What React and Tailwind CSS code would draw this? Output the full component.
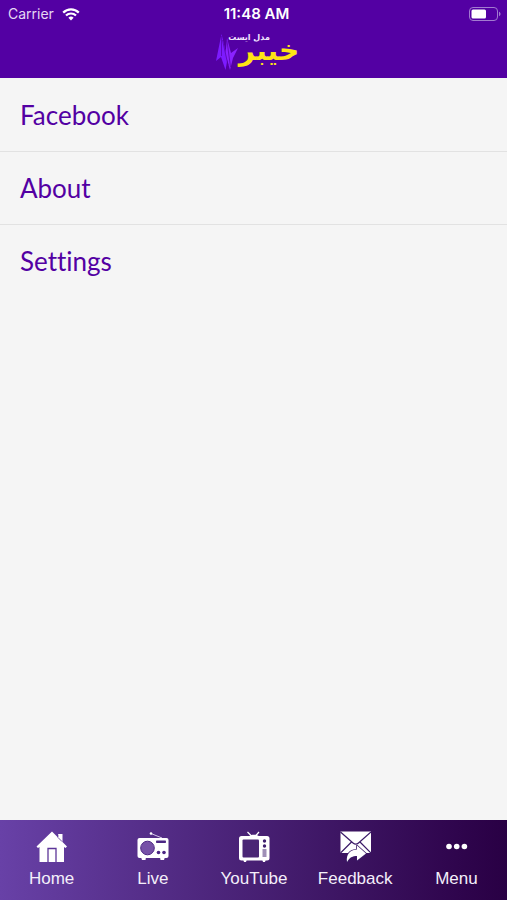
const menuItems = ['Facebook', 'About', 'Settings'];

function WifiIcon() {
  return (
    <svg viewBox="0 0 18 13" className="h-[13px] w-[18px]" fill="none" stroke="#fff" strokeWidth="2.2" aria-hidden="true">
      <path d="M1.2 4.6a11 11 0 0 1 15.6 0" />
      <path d="M4 7.6a7 7 0 0 1 10 0" />
      <path d="M9 12.4 6.4 9.8a3.7 3.7 0 0 1 5.2 0z" fill="#fff" stroke="none" />
    </svg>
  );
}

function BatteryIcon() {
  return (
    <svg viewBox="0 0 32 14" className="h-[14px] w-[32px]" aria-hidden="true">
      <rect x="0.5" y="0.5" width="28" height="13" rx="3.5" fill="none" stroke="#a27bd0" />
      <rect x="2.5" y="2.5" width="14.5" height="9" rx="1.5" fill="#fff" />
      <path d="M30 4.8c2 .7 2 3.7 0 4.4z" fill="#a27bd0" />
    </svg>
  );
}

function Logo() {
  return (
    <svg viewBox="0 2 92 44" className="h-11 w-[92px] overflow-visible" role="img" aria-label="خیبر">
      <path d="M9.500 6 4 33l5-4L13.500 42l2-11z" fill="#7d1bff" />
      <path d="M15 10 13.500 26l4.500 16 3-12 5-10-7 5z" fill="#8a22ff" />
      <path d="M9.500 8v20M10.500 12l5.500 25M15 13l3.500 26" stroke="#5300a3" strokeWidth="0.700" fill="none" />
      <text x="37" y="12" textAnchor="middle" fontSize="8" fontWeight="700" fill="#f3e8ff" className="font-['DejaVu_Sans',sans-serif]">
        مدل ایست
      </text>
      <text x="57" y="32" textAnchor="middle" fontSize="28" fontWeight="700" fill="#ffe414" className="font-['DejaVu_Sans',sans-serif]">
        خیبر
      </text>
    </svg>
  );
}

function HomeIcon() {
  return (
    <svg viewBox="0 0 32 32" className="size-8" fill="#fff" aria-hidden="true">
      <path d="M16 .5 31 15.500l-1.500 1.500-1.500-1V31H3.500V16L2 17 .5 15.500z" />
      <path d="M22 3h4.500v8L22 6.500z" />
      <path d="M22 3.500v3l4 4" fill="none" stroke="#5d3699" strokeWidth="0.7" />
      <path d="M12 31V17.500h8V31" fill="none" stroke="#5d3699" strokeWidth="1.300" />
    </svg>
  );
}

function RadioIcon() {
  return (
    <svg viewBox="0 0 32 32" className="size-8" fill="#fff" aria-hidden="true">
      <path d="m14 2.500 11 4.500" stroke="#d6c8ea" strokeWidth="1" />
      <circle cx="14" cy="2.500" r="1.300" />
      <rect x="0.500" y="7" width="31" height="20" rx="2" />
      <path d="M4 26h5l-.5 3H5zM23 26h5l-1 3h-3.500z" />
      <circle cx="10.500" cy="17" r="6.800" fill="#7651a7" stroke="#4d2785" strokeWidth="1" />
      <rect x="19" y="9.500" width="10" height="2.500" rx="0.800" fill="#4b2684" />
      <circle cx="21.500" cy="21.500" r="1.800" fill="#4b2684" />
      <circle cx="27" cy="21.500" r="1.800" fill="#4b2684" />
    </svg>
  );
}

function TvIcon() {
  return (
    <svg viewBox="0 0 32 32" className="size-8" fill="#fff" aria-hidden="true">
      <path d="m9.500 1 4 4M21 1l-3.500 4" stroke="#fff" strokeWidth="1.200" />
      <path d="M11 5.500c1-2.500 9-2.500 10 0z" />
      <path d="M5 28h4l-1 3H6zM24 28h4l-1 3h-2z" />
      <rect x="1" y="5" width="30.500" height="24.500" rx="2.500" />
      <rect x="4.500" y="8.500" width="16.500" height="18" rx="1" fill="#4a2675" />
      <circle cx="26.500" cy="10" r="1.700" fill="#40206f" />
      <circle cx="26.500" cy="15" r="1.700" fill="#40206f" />
      <path d="M24.500 19h4M24.500 21h4M24.500 23h4M24.500 25h4" stroke="#40206f" strokeWidth="1" />
    </svg>
  );
}

function FeedbackIcon() {
  return (
    <svg viewBox="0 0 32 32" className="size-8" fill="#fff" aria-hidden="true">
      <path d="M1.500 .5H32V22H1.500z" />
      <path d="m1.500 1 12.500 11c2 1.800 3.500 1.800 5.500 0L32 1M1.500 22l11-11M32 22l-11-11" fill="none" stroke="#3b1a68" strokeWidth="1.200" />
      <path
        d="M8 31C7 23 11 19 18 18.500V14.500l9 8-9 7V25c-4.500 0-7.500 1.500-10 6z"
        stroke="#3b1a68"
        strokeWidth="1.600"
        strokeLinejoin="round"
      />
      <path d="M8 31C7 23 11 19 18 18.500V14.500l9 8-9 7V25c-4.500 0-7.500 1.500-10 6z" />
    </svg>
  );
}

function MoreIcon() {
  return (
    <svg viewBox="0 0 32 32" className="size-8" fill="#fff" aria-hidden="true">
      <circle cx="9" cy="15.500" r="2.800" />
      <circle cx="16.700" cy="15.500" r="2.800" />
      <circle cx="24.400" cy="15.500" r="2.800" />
    </svg>
  );
}

const tabs = [
  { label: 'Home', Icon: HomeIcon },
  { label: 'Live', Icon: RadioIcon },
  { label: 'YouTube', Icon: TvIcon },
  { label: 'Feedback', Icon: FeedbackIcon },
  { label: 'Menu', Icon: MoreIcon },
];

export default function App() {
  return (
    <div className="flex min-h-screen flex-col bg-[#f5f5f5] font-['Inter',sans-serif]">
      <header className="bg-[#5300a3] pb-1 text-white">
        <div className="grid h-[30px] grid-cols-3 items-center pr-1.5 pb-0.5 pl-2">
          <div className="flex items-center gap-2">
            <span className="text-sm text-[#e5d8f3]">Carrier</span>
            <WifiIcon />
          </div>
          <time className="pl-1 text-center text-[15px] font-semibold">11:48 AM</time>
          <div className="flex justify-end">
            <BatteryIcon />
          </div>
        </div>
        <div className="flex justify-center pl-2">
          <Logo />
        </div>
      </header>

      <main className="flex-1 pt-px">
        <ul className="divide-y divide-[#e2e2e2]">
          {menuItems.map((item) => (
            <li key={item}>
              <a
                href="#"
                className="block px-5 py-5 font-['Lato',sans-serif] text-[26px] leading-8 text-[#5300a3] [font-variant-ligatures:none]"
              >
                {item}
              </a>
            </li>
          ))}
        </ul>
      </main>

      <nav className="grid grid-cols-5 bg-linear-to-r from-[#6841a7] to-[#290044] pt-[11px] pb-[9px] pl-px">
        {tabs.map(({ label, Icon }) => (
          <button
            key={label}
            type="button"
            className="flex flex-col items-center gap-1 font-['Liberation_Sans',sans-serif] text-[17px] leading-6 text-[#f4effa]"
          >
            <Icon />
            {label}
          </button>
        ))}
      </nav>
    </div>
  );
}
